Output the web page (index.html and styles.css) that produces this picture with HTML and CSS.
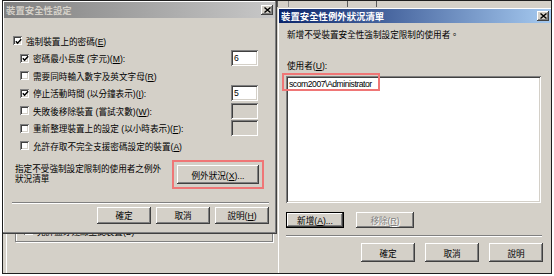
FILE: index.html
```html
<!DOCTYPE html>
<html lang="zh-Hant">
<head>
<meta charset="UTF-8" />
<title>裝置安全性設定</title>
<link rel="stylesheet" href="styles.css">
</head>
<body>

<div class="screen">

  <!-- windows lying behind the two dialogs -->
  <div class="behind-top">
    <span class="vline v1"></span>
    <span class="vline v2"></span>
    <span class="vline v3"></span>
    <span class="vline v4"></span>
  </div>
  <div class="behind">
    <div class="behind-edge"></div>
    <div class="group">
      <div class="row">
        <span class="check"></span>
        <span>允許藍牙連線至此裝置(B)</span>
      </div>
    </div>
  </div>

  <div class="window settings inactive">
    <div class="titlebar">
      <span>裝置安全性設定</span>
      <span class="close"><svg width="7" height="6" viewBox="0 0 7 6"><path d="M0.5 0.5 L6.5 5.5 M6.5 0.5 L0.5 5.5" stroke="#000" stroke-width="1.4"/></svg></span>
    </div>

    <div class="options">
      <div class="row top-level">
        <span class="check on"><svg width="7" height="7" viewBox="0 0 7 7"><path d="M0.8 3.2 L2.6 5.2 L6.2 1.2" fill="none" stroke="#000" stroke-width="1.5"/></svg></span>
        <span>強制裝置上的密碼(<u>E</u>)</span>
      </div>
      <div class="row">
        <span class="check on"><svg width="7" height="7" viewBox="0 0 7 7"><path d="M0.8 3.2 L2.6 5.2 L6.2 1.2" fill="none" stroke="#000" stroke-width="1.5"/></svg></span>
        <span>密碼最小長度 (字元)(<u>M</u>):</span>
        <span class="field">6</span>
      </div>
      <div class="row">
        <span class="check"></span>
        <span>需要同時輸入數字及英文字母(<u>R</u>)</span>
      </div>
      <div class="row">
        <span class="check on"><svg width="7" height="7" viewBox="0 0 7 7"><path d="M0.8 3.2 L2.6 5.2 L6.2 1.2" fill="none" stroke="#000" stroke-width="1.5"/></svg></span>
        <span>停止活動時間 (以分鐘表示)(<u>I</u>):</span>
        <span class="field">5</span>
      </div>
      <div class="row">
        <span class="check"></span>
        <span>失敗後移除裝置 (嘗試次數)(<u>W</u>):</span>
        <span class="field disabled"></span>
      </div>
      <div class="row">
        <span class="check"></span>
        <span>重新整理裝置上的設定 (以小時表示)(<u>F</u>):</span>
        <span class="field disabled"></span>
      </div>
      <div class="row">
        <span class="check"></span>
        <span>允許存取不完全支援密碼設定的裝置(<u>A</u>)</span>
      </div>
    </div>

    <div class="exception">
      <p class="exception-text">指定不受強制設定限制的使用者之例外狀況清單</p>
      <button class="btn wide marked">例外狀況(<u>X</u>)...</button>
    </div>

    <div class="separator"></div>

    <div class="actions">
      <button class="btn">確定</button>
      <button class="btn">取消</button>
      <button class="btn">說明(<u>H</u>)</button>
    </div>
  </div>

  <div class="window exceptions">
    <div class="titlebar">
      <span>裝置安全性例外狀況清單</span>
      <span class="close"><svg width="7" height="6" viewBox="0 0 7 6"><path d="M0.5 0.5 L6.5 5.5 M6.5 0.5 L0.5 5.5" stroke="#000" stroke-width="1.4"/></svg></span>
    </div>

    <div class="dialog-body">
      <p class="intro">新增不受裝置安全性強制設定限制的使用者。</p>
      <p class="list-label">使用者(<u>U</u>):</p>
      <div class="listbox">
        <div class="item"><span class="item-text">scom2007\Administrator</span></div>
      </div>

      <div class="list-actions">
        <button class="btn list-btn default">新增(<u>A</u>)...</button>
        <button class="btn list-btn" disabled>移除(<u>R</u>)</button>
      </div>

      <div class="separator"></div>

      <div class="actions">
        <button class="btn">確定</button>
        <button class="btn">取消</button>
        <button class="btn">說明</button>
      </div>
    </div>
  </div>

</div>

</body>
</html>
```

FILE: styles.css
```css
body {
  margin: 0;
  background: #fff;
  color: #000;
  font-family: 'Liberation Sans', 'Noto Sans CJK TC', sans-serif;
  font-size: 8.6px;
}
p {
  margin: 0;
}
u {
  text-decoration-thickness: 1px;
  text-underline-offset: 1px;
}

.screen {
  position: relative;
  width: 550px;
  height: 274px;
  margin-left: 2px;
  background: #d4d0c8;
  overflow: hidden;
}
.screen::after {
  content: "";
  position: absolute;
  inset: 0;
  border: 1px solid #1e1e1e;
  pointer-events: none;
  z-index: 10;
}

/* background windows */
.behind-top {
  position: absolute;
  left: 275px;
  top: 0;
  width: 275px;
  height: 8px;
}
.vline {
  position: absolute;
  top: 0;
  width: 1px;
  height: 8px;
  background: #5a5a5a;
}
.v1 { left: 0; }
.v2 { left: 11px; background: #8a8a8a; }
.v3 { left: 70px; }
.v4 { left: 99px; }

.behind {
  position: absolute;
  left: 0;
  top: 200px;
  width: 300px;
  height: 74px;
}
.behind-edge {
  position: absolute;
  left: 4px;
  top: 0;
  width: 1px;
  height: 74px;
  background: #fff;
}
.behind .group {
  position: absolute;
  left: 13px;
  top: 18px;
  width: 256px;
  height: 22px;
  border: 1px solid #808080;
  box-shadow: inset 1px 1px #fff, 1px 1px #fff;
}
.behind .row {
  padding: 3px 0 0 8px;
}

/* windows */
.window {
  position: absolute;
  box-sizing: border-box;
  padding: 2px;
  background: #d4d0c8;
  box-shadow: inset -1px -1px #404040, inset 1px 1px #d4d0c8,
              inset -2px -2px #808080, inset 2px 2px #fff;
}
.settings {
  left: 0;
  top: 0;
  width: 275px;
  height: 234px;
  z-index: 2;
}
.exceptions {
  left: 275px;
  top: 7px;
  width: 276px;
  height: 270px;
  z-index: 3;
}

.titlebar {
  display: flex;
  align-items: center;
  justify-content: space-between;
  height: 14px;
  padding: 0 2px 0 2px;
  background: linear-gradient(to right, #0a246a, #a6caf0);
  color: #fff;
  font-size: 9.4px;
  font-weight: 700;
}
.inactive .titlebar {
  height: 16px;
  background: linear-gradient(to right, #808080, #c8c8c8);
  color: #d4d0c8;
}
.close {
  display: flex;
  align-items: center;
  justify-content: center;
  width: 12px;
  height: 10px;
  background: #d4d0c8;
  box-shadow: inset -1px -1px #404040, inset 1px 1px #fff, inset -2px -2px #808080;
}

/* controls */
.row {
  display: flex;
  align-items: center;
  height: 17.5px;
  white-space: nowrap;
}
.check {
  display: flex;
  align-items: center;
  justify-content: center;
  flex: none;
  width: 9px;
  height: 9px;
  margin-right: 4px;
  background: #fff;
  box-shadow: inset 1px 1px #808080, inset -1px -1px #fff,
              inset 2px 2px #404040, inset -2px -2px #d4d0c8;
}
.check svg {
  margin: 1px 0 0 1px;
}
.field {
  box-sizing: border-box;
  width: 27px;
  height: 16px;
  margin-left: auto;
  padding: 0 3px;
  line-height: 16px;
  background: #fff;
  box-shadow: inset 1px 1px #808080, inset -1px -1px #fff,
              inset 2px 2px #404040, inset -2px -2px #d4d0c8;
}
.field.disabled {
  background: #d4d0c8;
}

.btn {
  box-sizing: border-box;
  width: 54px;
  height: 17px;
  padding: 0;
  border: none;
  background: #d4d0c8;
  color: #000;
  font: inherit;
  box-shadow: inset -1px -1px #404040, inset 1px 1px #fff,
              inset -2px -2px #808080, inset 2px 2px #d4d0c8;
}
.btn:disabled {
  color: #808080;
  text-shadow: 1px 1px #fff;
}
.btn.default {
  border: 1px solid #000;
}

.separator {
  height: 0;
  border-top: 1px solid #808080;
  border-bottom: 1px solid #fff;
}
.actions {
  display: flex;
  justify-content: flex-end;
}

/* settings dialog */
.options {
  margin-top: 14px;
  padding: 0 17px 0 16px;
}
.options .top-level {
  margin-left: -7px;
}
.exception {
  display: flex;
  align-items: center;
  height: 20px;
  margin-top: 10px;
  padding: 0 16px 0 11px;
}
.exception-text {
  width: 152px;
  line-height: 9.5px;
}
.btn.wide {
  width: 82px;
  height: 19px;
  margin-left: auto;
}
.btn.marked {
  outline: 2px solid #ef7676;
  outline-offset: 3px;
}
.settings .separator {
  margin: 17px 6px 0 8px;
}
.settings .actions {
  gap: 5px;
  margin-top: 3px;
  padding-right: 6px;
}

/* exceptions dialog */
.dialog-body {
  padding: 0 9px 0 7px;
}
.intro {
  margin: 7px 0 0 1px;
  line-height: 10px;
}
.list-label {
  margin: 21px 0 0 1px;
  line-height: 10px;
}
.listbox {
  box-sizing: border-box;
  height: 127px;
  margin: 5px 1px 0 0;
  padding: 2px;
  background: #fff;
  box-shadow: inset 1px 1px #808080, inset -1px -1px #fff,
              inset 2px 2px #404040, inset -2px -2px #d4d0c8;
}
.item {
  margin-top: 1px;
  padding-left: 1px;
  line-height: 10px;
}
.item-text {
  position: relative;
  letter-spacing: -0.45px;
}
.item-text::after {
  content: "";
  position: absolute;
  left: -7px;
  top: -6px;
  width: 98px;
  height: 18px;
  box-sizing: border-box;
  border: 2px solid #ef7676;
}
.list-actions {
  display: flex;
  gap: 12px;
  margin-top: 9px;
}
.btn.list-btn {
  width: 58px;
  height: 16px;
}
.exceptions .separator {
  margin-top: 7px;
}
.exceptions .actions {
  gap: 10px;
  margin: 6px -1px 0 0;
}
.exceptions .actions .btn {
  height: 19px;
}
```
